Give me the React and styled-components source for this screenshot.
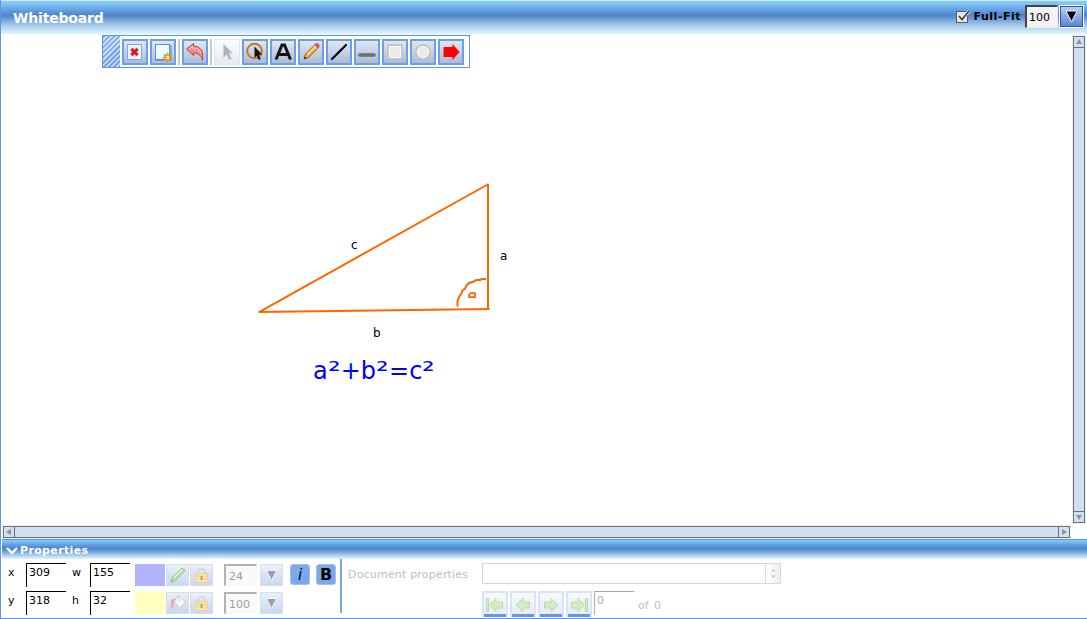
import React from 'react';
import styled, { createGlobalStyle } from 'styled-components';

const Global = createGlobalStyle`
  * { box-sizing: border-box; }
  body { margin: 0; background: #fff; overflow: hidden; }
  svg { display: block; }
`;

const Window = styled.main`
  width: 1087px;
  height: 619px;
  display: flex;
  flex-direction: column;
  border-left: 1px solid #5f95e6;
  border-bottom: 1px solid #5f95e6;
  background: #fff;
  font-family: Verdana, 'DejaVu Sans', sans-serif;
  font-size: 11px;
  line-height: 14px;
  color: #000;
`;

const TitleBar = styled.header`
  height: 35px;
  flex: none;
  display: flex;
  align-items: center;
  padding: 0 3px 3px 12px;
  border-top: 1px solid #d3ecff;
  background: linear-gradient(#86cdff 0, #7fc2f6 3px, #5085cc 14px, #5b8fd1 16px, #a5c8e9 24px, #e2f6ff 33px, #fff 34px);
`;

const Title = styled.h1`
  margin: 3px auto 0 0;
  color: #fff;
  font-size: 14px;
  line-height: 18px;
  letter-spacing: -0.18px;
`;

const FitLabel = styled.label`
  display: flex;
  align-items: center;
  gap: 4px;
  font-weight: bold;
  letter-spacing: 0.5px;
  margin: 0 4px 0 0;
`;

const NumberBox = styled.div`
  width: ${p => p.$w}px;
  height: ${p => p.$h}px;
  padding: ${p => p.$pad || '4px 0 0 3px'};
  border: solid #eee;
  border-width: 2px 1px 1px 2px;
  border-top-color: #444;
  border-left-color: #444;
  background: #f2f2f2;
  opacity: ${p => (p.$dim ? 0.4 : 1)};
`;

const DropButton = styled.button`
  width: ${p => p.$w}px;
  height: ${p => p.$h}px;
  padding: 0;
  margin-left: ${p => (p.$dim ? 0 : 1)}px;
  display: flex;
  align-items: center;
  justify-content: center;
  border: 1px solid ${p => (p.$dim ? '#dedede' : '#fff')};
  background: ${p => (p.$dim ? 'linear-gradient(#e9f0fb, #c5d8f4)' : 'linear-gradient(#bcd2f5, #5384d2)')};
  ${p => !p.$dim && 'box-shadow: inset 0 0 0 1px #35588f;'}
`;

const Board = styled.section`
  height: 491px;
  flex: none;
  display: flex;
`;

const Canvas = styled.div`
  position: relative;
  flex: 1;
  padding-left: 101px;
`;

const Toolbar = styled.div`
  width: 368px;
  height: 33px;
  display: flex;
  align-items: center;
  gap: 2px;
  border: 1px solid #5f95e6;
  background: #fff;
`;

const Grip = styled.div`
  width: 17px;
  height: 31px;
  background: repeating-linear-gradient(135deg, #79a7ec 0 2.1px, #c4dcff 2.1px 3.54px);
`;

const ToolButton = styled.button`
  width: 26px;
  height: 26px;
  padding: 0;
  display: flex;
  align-items: center;
  justify-content: center;
  border: 2px solid #6b9fec;
  background: linear-gradient(#dfe7f4, #aebbd3);
  ${p => p.$dim && 'border: 1px solid #d9e6fa; background: linear-gradient(#fafcfe, #e6eaf2);'}
`;

const Separator = styled.i`
  width: 2px;
  height: 26px;
  background: #c8c8c8;
`;

const Drawing = styled.svg`
  position: absolute;
  left: 0;
  top: 0;
`;

const Note = styled.span`
  position: absolute;
  left: ${p => p.$x}px;
  top: ${p => p.$y}px;
  font-size: 12px;
`;

const Formula = styled.div`
  position: absolute;
  left: 312px;
  top: 320px;
  color: #0000ff;
  font-size: 24px;
  line-height: 32px;
  white-space: nowrap;
`;

const Sup = styled.span`
  display: inline-block;
  width: 13px;
  font-size: 25px;
  transform: scaleX(1.26);
  transform-origin: 0 50%;
`;

const Scroll = styled.div`
  flex: none;
  display: flex;
  flex-direction: ${p => (p.$vertical ? 'column' : 'row')};
  justify-content: space-between;
  width: ${p => (p.$vertical ? 12 : 1067)}px;
  height: ${p => (p.$vertical ? 487 : 12)}px;
  margin: ${p => (p.$vertical ? '1px 2px 0 0' : '0 0 1px 2px')};
  border: 1px solid #68717f;
  background: #d0dff2;
  outline: 1px solid #f0f0ec;
`;

const ScrollEnd = styled.div`
  width: ${p => (p.$vertical ? 10 : 11)}px;
  height: ${p => (p.$vertical ? 11 : 10)}px;
  display: flex;
  align-items: center;
  justify-content: center;
  border: 0 solid #68717f;
  border-${p => p.$edge}-width: 1px;
`;

const PanelHeader = styled.header`
  height: 20px;
  flex: none;
  display: flex;
  align-items: center;
  gap: 2px;
  padding: 2px 0 0 4px;
  margin-left: 1px;
  border-top: 1px solid #5f95e6;
  color: #fff;
  font-weight: bold;
  letter-spacing: 0.35px;
  background: linear-gradient(#83cbff 0, #5085cc 8px, #5b8fd1 10px, #a9cbea 15px, #e2f6ff 19px);
`;

const Panel = styled.section`
  display: flex;
  flex: 1;
`;

const Fields = styled.div`
  width: 339px;
  flex: none;
  padding: 4px 0 0 7px;
  display: flex;
  flex-direction: column;
  gap: 4px;
`;

const Row = styled.div`
  display: flex;
  height: 24px;
  align-items: flex-start;
`;

const FieldLabel = styled.span`
  width: ${p => p.$w}px;
  padding-top: 3px;
`;

const Field = styled.div`
  width: 40px;
  height: 24px;
  padding: 2px 0 0 2px;
  border: solid ${p => (p.$dim ? '#aaa' : '#000')};
  border-width: 1px 0 0 1px;
  color: ${p => (p.$dim ? '#b0b0b0' : '#000')};
  margin-right: ${p => p.$gap || 0}px;
`;

const Swatch = styled.div`
  width: 30px;
  height: 22px;
  margin: 1px 1px 0 0;
  background: ${p => p.$color};
`;

const SmallButton = styled.button`
  width: 23px;
  height: 22px;
  padding: 0;
  margin: 1px ${p => p.$gap}px 0 0;
  display: flex;
  align-items: center;
  justify-content: center;
  border: 1px solid #dcdcdc;
  background: linear-gradient(#e9f0fb, #c5d8f4);
`;

const Size = styled.div`
  display: flex;
  gap: 3px;
  padding-top: 1px;
`;

const StyleButton = styled.button`
  width: 20px;
  height: 21px;
  padding: 0;
  margin: 1px 0 0 ${p => p.$gap}px;
  border: 1px solid #b3bdcb;
  border-radius: 3px;
  background: #79a8ee;
  font: ${p => (p.$italic ? 'italic 15px/20px' : 'bold 16px/20px')} Verdana, 'DejaVu Sans', sans-serif;
  color: #000;
`;

const Divider = styled.i`
  width: 2px;
  height: 54px;
  background: #79a5ec;
`;

const DocProps = styled.div`
  padding: 4px 0 0 6px;
  display: flex;
  color: #bdbdbd;
`;

const DocLabel = styled.span`
  width: 134px;
  padding-top: 5px;
  letter-spacing: 0.19px;
  white-space: nowrap;
`;

const Combo = styled.div`
  width: 299px;
  height: 21px;
  display: flex;
  justify-content: flex-end;
  border: 1px solid #d8d8d8;
`;

const Spinner = styled.div`
  width: 15px;
  display: flex;
  align-items: center;
  justify-content: center;
  border-left: 1px solid #d8d8d8;
  background: linear-gradient(90deg, #fff, #eee);
`;

const Pager = styled.div`
  display: flex;
  gap: 2px;
  margin-top: 7px;
`;

const PageButton = styled.button`
  width: 26px;
  height: 26px;
  padding: 0;
  display: flex;
  align-items: center;
  justify-content: center;
  border: 2px solid #d4e4fb;
  border-bottom: 0;
  box-shadow: inset 0 -3px #6496e4;
  background: linear-gradient(#f7f9fc, #e5e9f1);
`;

const Count = styled.span`
  padding-top: 8px;
  margin-left: 2px;
  word-spacing: 2px;
`;

const Triangle = ({ dir = 'down', color = '#8c929a', size = 6 }) => {
  const turn = { down: 0, left: 90, up: 180, right: 270 }[dir];
  return (
    <svg width={size} height={size} viewBox="0 0 6 6">
      <path d="M0 1h6L3 6z" fill={color} transform={`rotate(${turn} 3 3)`} />
    </svg>
  );
};

const DimTriangle = () => (
  <svg width="13" height="13" viewBox="0 0 13 13">
    <path d="M1.500 1.500h10L6.500 11.500z" fill="#9c9fa4" stroke="#fff" strokeWidth=".8" />
  </svg>
);

const Icon = ({ children }) => <svg width="22" height="22" viewBox="0 0 22 22" fill="none">{children}</svg>;

const icons = {
  clear: <Icon>
    <rect x="3.500" y="3.500" width="14" height="15" fill="#e9f4fd" stroke="#7bacd9" />
    <path d="M7 7.500l7 7m0-7l-7 7" stroke="#ffb4b4" strokeWidth="4" />
    <path d="M7.500 8l6 6m0-6l-6 6" stroke="#dd1320" strokeWidth="2.700" />
  </Icon>,
  page: <Icon>
    <rect x="3.500" y="3.500" width="14" height="15" fill="#eef8ff" stroke="#5c94c6" />
    <path d="M3 19h16V4" stroke="#4780b8" />
    <path d="M15.500 11l1.200 2.700 2.800-1-1 2.800 2.500 1-2.500 1.200 1 2.600-2.800-.8-1.200 2.300-1.200-2.300-2.800.8 1-2.600-2.500-1.200 2.500-1-1-2.800 2.800 1z" fill="#e0952c" />
    <circle cx="15.500" cy="16.500" r="2" fill="#ffed81" />
  </Icon>,
  undo: <Icon><path d="M2.500 8L9.500 2.500v2.500c7 .5 10.500 5 9 14.500-1-4.500-4-7.500-9-7.500v2.500z" fill="#f58b90" stroke="#a94a50" /><path d="M5 8l3.500-3v2c5 0 7.500 2 8.500 5" stroke="#ffc6c7" /></Icon>,
  pointer: <Icon><path d="M7.500 3l9 9-3.700.3 2.700 5.400-2.300 1.100-2.600-5.200-3.100 3z" fill="#b2b2b2" stroke="#cdd0d4" strokeWidth=".5" /></Icon>,
  lasso: <Icon><circle cx="10.500" cy="10" r="7.300" stroke="#cf7412" strokeWidth="2" /><path d="M10.500 5.500l7.500 8-3.200.5 2 4-2 1-2.100-4.200-2.200 2z" fill="#111" /></Icon>,
  text: <Icon><path d="M4 18.500L10 4h2.500l6 14.500M6 13.500h10" stroke="#151515" strokeWidth="3" /></Icon>,
  pencil: <Icon>
    <path d="M4 18l1.500-5L15 3.500l3.500 3.200-9.800 9.700z" fill="#e8aa4b" stroke="#9a661f" />
    <path d="M7 14l9-9" stroke="#ffdd9a" strokeWidth="1.500" />
    <path d="M14.500 4l1.200-1.500c1.500-1 4.300 1.200 3.500 3L18 7z" fill="#e15b52" stroke="#bd4b46" strokeWidth=".5" />
    <path d="M13.500 5l3.500 3" stroke="#eee" /><path d="M4 18l.8-2.500 1.800 1.700z" fill="#222" />
  </Icon>,
  line: <Icon><path d="M4 18L18 4" stroke="#090b0e" strokeWidth="2.300" strokeLinecap="round" /></Icon>,
  underline: <Icon><rect x="2.500" y="12.500" width="17" height="3" rx="1.500" fill="#66727f" stroke="#78838e" /></Icon>,
  square: <Icon><rect x="4" y="4" width="14" height="14" rx="1" fill="#eaeaea" stroke="#bcbcb8" strokeWidth="1.300" /><rect x="5.500" y="5.500" width="11" height="11" stroke="#f6f6f5" /></Icon>,
  circle: <Icon><circle cx="11" cy="11" r="7" fill="#ebebea" stroke="#bcbcb8" strokeWidth="1.300" /><circle cx="11" cy="11" r="5.800" stroke="#f7f7f6" /></Icon>,
  arrow: <Icon><path d="M3.500 6h9V3l7 8-7 8v-3h-9z" fill="#ff0000" /></Icon>,
};

const Lock = () => <svg width="19" height="19" viewBox="0 0 19 19" fill="none">
  <path d="M6 8V5.500Q6 3 9.500 3T13 5.500V8" stroke="#d7dadd" strokeWidth="2" />
  <rect x="3.500" y="7.500" width="12" height="9" fill="#fde4a9" stroke="#efd091" />
  <path d="M4 10h11M4 13h11" stroke="#f6d389" /><path d="M8.500 10h2v4h-2z" fill="#a4a4a3" />
</svg>;

const Marker = () => <svg width="20" height="20" viewBox="0 0 20 20"><path d="M3 17l1-4L14 3l3 2.500L7 15.500z" fill="#b9e3a7" stroke="#91ba87" /><path d="M6 12.500l8-8" stroke="#e6f6dd" strokeWidth="1.500" /></svg>;
const Bucket = () => <svg width="20" height="20" viewBox="0 0 20 20"><path d="M6 8l5-5 7 6-6.500 6.500z" fill="#f7f7f7" stroke="#c2c8d1" /><path d="M9 2l2.500 6" stroke="#c6ccd5" /><path d="M3 7l4-2-1 4-1 8-1-4-1 3z" fill="#eda8ae" /></svg>;

const PageArrow = ({ flip, end }) => <svg width="22" height="20" viewBox="0 0 22 20">
  <g transform={`translate(0 -1)${flip ? ' matrix(-1 0 0 1 22 0)' : ''}`} fill="#d2ecc5" stroke="#b9dca9">
    {end && <path d="M2.500 4.500h2v13h-2z" />}
    <path d={end ? 'M5.500 11L12 4.500v3.500h6.500v6H12v3.500z' : 'M4 11l7-6.500v3.500h6.500v6H11v3.500z'} />
  </g>
</svg>;

const order = ['clear', 'page', '|', 'undo', '|', 'pointer', 'lasso', 'text', 'pencil', 'line', 'underline', 'square', 'circle', 'arrow'];

export default function App() {
  return (
    <>
      <Global />
      <Window>
        <TitleBar>
          <Title>Whiteboard</Title>
          <FitLabel>
            <svg width="14" height="14" viewBox="0 0 14 14" fill="none">
              <rect x=".500" y="1.500" width="11" height="11" fill="#e5e5e5" stroke="#555d69" />
              <path d="M3 6l3 3.500L13 1" stroke="#fff" strokeWidth="3" /><path d="M3 6l3 3.500L13 1" stroke="#444" strokeWidth="1.900" />
            </svg>
            Full-Fit
          </FitLabel>
          <NumberBox $w={33} $h={23} $pad="4px 0 0 2px">100</NumberBox>
          <DropButton $w={25} $h={23}>
            <svg width="15" height="15" viewBox="0 0 15 15"><path d="M2 2h11L7.500 13z" fill="#000" stroke="#fff" /></svg>
          </DropButton>
        </TitleBar>
        <Board>
          <Canvas>
            <Drawing width="1071" height="491" viewBox="1 35 1071 491" fill="none" stroke="#ff6600" strokeWidth="2">
              <path d="M259.500 311.800L488.500 184M488 184v125M258.500 312l231-3" />
              <path d="M486 279h-4l-2 1h-4l-2 1.500-5 1.500-2.500 2.500-1.500 3-2.500 2-1 3-2 2.500-1.500 3.500-.5 2v5" />
              <path d="M470.500 293.200h4.500v4h-6v-2.200z" strokeWidth="1.800" />
            </Drawing>
            <Toolbar>
              <Grip />
              {order.map((name, i) => name === '|'
                ? <Separator key={i} />
                : <ToolButton key={i} $dim={name === 'pointer'}>{icons[name]}</ToolButton>)}
            </Toolbar>
            <Note $x={350} $y={203}>c</Note>
            <Note $x={499} $y={214}>a</Note>
            <Note $x={372} $y={291}>b</Note>
            <Formula>a<Sup>²</Sup>+b<Sup>²</Sup>=c<Sup>²</Sup></Formula>
          </Canvas>
          <Scroll $vertical>
            <ScrollEnd $vertical $edge="bottom"><Triangle dir="up" /></ScrollEnd>
            <ScrollEnd $vertical $edge="top"><Triangle /></ScrollEnd>
          </Scroll>
        </Board>
        <Scroll>
          <ScrollEnd $edge="right"><Triangle dir="left" /></ScrollEnd>
          <ScrollEnd $edge="left"><Triangle dir="right" /></ScrollEnd>
        </Scroll>
        <PanelHeader>
          <svg width="12" height="8" viewBox="0 0 12 8"><path d="M1 1l5 5 5-5" fill="none" stroke="#fff" strokeWidth="2.300" /></svg>
          Properties
        </PanelHeader>
        <Panel>
          <Fields>
            <Row>
              <FieldLabel $w={18}>x</FieldLabel><Field $gap={6}>309</Field>
              <FieldLabel $w={18}>w</FieldLabel><Field $gap={5}>155</Field>
              <Swatch $color="#b3b2fd" />
              <SmallButton $gap={1}><Marker /></SmallButton><SmallButton $gap={11}><Lock /></SmallButton>
              <Size><NumberBox $w={33} $h={22} $dim>24</NumberBox><DropButton $w={23} $h={22} $dim><DimTriangle /></DropButton></Size>
              <StyleButton $gap={7} $italic>i</StyleButton><StyleButton $gap={6}>B</StyleButton>
            </Row>
            <Row>
              <FieldLabel $w={18}>y</FieldLabel><Field $gap={6}>318</Field>
              <FieldLabel $w={18}>h</FieldLabel><Field $gap={5}>32</Field>
              <Swatch $color="#ffffc0" />
              <SmallButton $gap={1}><Bucket /></SmallButton><SmallButton $gap={11}><Lock /></SmallButton>
              <Size><NumberBox $w={33} $h={22} $dim>100</NumberBox><DropButton $w={23} $h={22} $dim><DimTriangle /></DropButton></Size>
            </Row>
          </Fields>
          <Divider />
          <DocProps>
            <DocLabel>Document properties</DocLabel>
            <div>
              <Combo><Spinner><svg width="7" height="11" viewBox="0 0 7 11"><path d="M1 3.500L3.500 1 6 3.500zM1 7.500h5L3.500 10z" fill="#c5c5c5" /></svg></Spinner></Combo>
              <Pager>
                <PageButton><PageArrow end /></PageButton>
                <PageButton><PageArrow /></PageButton>
                <PageButton><PageArrow flip /></PageButton>
                <PageButton><PageArrow flip end /></PageButton>
                <Field $dim>0</Field>
                <Count>of 0</Count>
              </Pager>
            </div>
          </DocProps>
        </Panel>
      </Window>
    </>
  );
}
